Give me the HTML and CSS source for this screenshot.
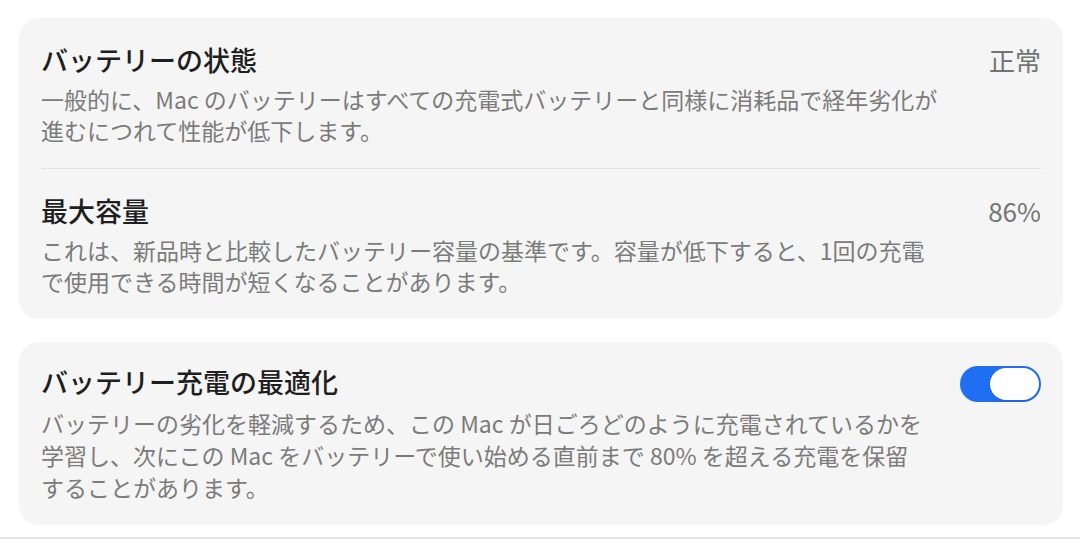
FILE: index.html
```html
<!DOCTYPE html>
<html lang="ja">
<head>
  <meta charset="UTF-8">
  <meta name="viewport" content="width=device-width, initial-scale=1.0">
  <title>バッテリー</title>
  <link rel="stylesheet" href="styles.css">
</head>
<body>
  <div class="page">
    <section class="card">
      <div class="row">
        <div class="text">
          <div class="title">バッテリーの状態</div>
          <p class="desc">一般的に、Mac のバッテリーはすべての充電式バッテリーと同様に消耗品で経年劣化が<br>進むにつれて性能が低下します。</p>
        </div>
        <div class="value">正常</div>
      </div>
      <div class="row">
        <div class="text">
          <div class="title">最大容量</div>
          <p class="desc">これは、新品時と比較したバッテリー容量の基準です。容量が低下すると、1回の充電<br>で使用できる時間が短くなることがあります。</p>
        </div>
        <div class="value">86%</div>
      </div>
    </section>

    <section class="card card-toggle">
      <div class="row">
        <div class="text">
          <div class="title">バッテリー充電の最適化</div>
          <p class="desc">バッテリーの劣化を軽減するため、この Mac が日ごろどのように充電されているかを<br>学習し、次にこの Mac をバッテリーで使い始める直前まで 80% を超える充電を保留<br>することがあります。</p>
        </div>
        <label class="toggle">
          <input type="checkbox" checked>
          <span class="knob"></span>
        </label>
      </div>
    </section>
  </div>
  <div class="footer"></div>
</body>
</html>
```

FILE: styles.css
```css
body {
  margin: 0;
  background: #fff;
  font-family: "Noto Sans CJK JP", "Liberation Sans", sans-serif;
  height: 539px;
  overflow: hidden;
  display: flex;
  flex-direction: column;
}
.page {
  flex: 1;
  padding: 18px 17px 0 19px;
  display: flex;
  flex-direction: column;
  gap: 23px;
}
.card {
  background: #f5f5f5;
  border-radius: 20px;
  padding: 0 22px;
}
.row {
  display: flex;
  justify-content: space-between;
  align-items: flex-start;
  padding: 24px 0 22px;
}
.row + .row {
  border-top: 1px solid #e2e2e2;
}
.card-toggle .row {
  padding-top: 22px;
}
.card-toggle .desc {
  margin-top: 7px;
  line-height: 32px;
}
.title {
  font-size: 27px;
  line-height: 36px;
  font-weight: 500;
  color: #1e1e1e;
}
.desc {
  margin: 6px 0 0;
  font-size: 23px;
  line-height: 31px;
  color: #7b7b7b;
}
.value {
  font-size: 26px;
  line-height: 36px;
  color: #737373;
}
.toggle {
  position: relative;
  display: block;
  width: 81px;
  height: 36px;
  margin-top: 2px;
  border-radius: 18px;
  background: #1f6ff3;
  cursor: pointer;
}
.toggle input {
  display: none;
}
.knob {
  position: absolute;
  top: 2px;
  right: 2px;
  width: 49px;
  height: 32px;
  border-radius: 16px;
  background: #fff;
  box-shadow: 0 1px 2px rgba(0, 0, 0, 0.15);
}
.footer {
  height: 2px;
  background: #e3e3e3;
}
```
